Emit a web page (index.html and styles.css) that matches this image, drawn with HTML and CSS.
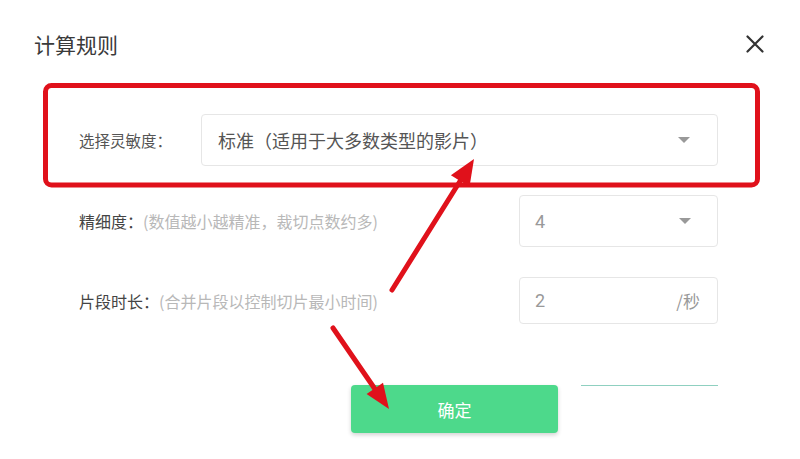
FILE: index.html
```html
<!DOCTYPE html>
<html lang="zh-CN">
<head>
<meta charset="utf-8">
<title>计算规则</title>
<link rel="stylesheet" href="styles.css">
</head>
<body>
<div class="dialog">
  <div class="header">
    <div class="title">计算规则</div>
    <svg class="close" width="18" height="18" viewBox="0 0 18 18"><path d="M1.5 1.5 L16.5 16.5 M16.5 1.5 L1.5 16.5" stroke="#333" stroke-width="2.2" stroke-linecap="round" fill="none"/></svg>
  </div>
  <div class="form">
    <div class="row row-main">
      <div class="label label-main">选择灵敏度：</div>
      <div class="box select-main">
        <span class="value-main">标准（适用于大多数类型的影片）</span>
        <span class="caret"></span>
      </div>
    </div>
    <div class="row row-sub">
      <div class="label"><span class="label-dark">精细度：</span><span class="hint">(数值越小越精准，裁切点数约多)</span></div>
      <div class="box box-small">
        <span class="value-num">4</span>
        <span class="caret"></span>
      </div>
    </div>
    <div class="row row-sub row-last">
      <div class="label"><span class="label-dark">片段时长：</span><span class="hint">(合并片段以控制切片最小时间)</span></div>
      <div class="box box-small box-short">
        <span class="value-num">2</span>
        <span class="unit">/秒</span>
      </div>
    </div>
  </div>
  <div class="footer">
    <div class="btn-ok">确定</div>
    <div class="btn-ghost"></div>
  </div>
</div>
<svg class="annot" width="800" height="459" viewBox="0 0 800 459">
  <rect x="45.5" y="85.5" width="712" height="99.5" rx="6" ry="6" fill="none" stroke="#e0111b" stroke-width="5"/>
  <line x1="392" y1="290" x2="462" y2="178" stroke="#e0111b" stroke-width="5" stroke-linecap="round"/>
  <polygon points="474,159 469.5,186.8 450.9,175.2" fill="#e0111b"/>
  <line x1="333" y1="328" x2="377" y2="392" stroke="#e0111b" stroke-width="5" stroke-linecap="round"/>
  <polygon points="389,409 366.6,394.1 383,382.7" fill="#e0111b"/>
</svg>
</body>
</html>
```
FILE: styles.css
```css
html, body {
  margin: 0;
  padding: 0;
  background: #ffffff;
  width: 800px;
  height: 459px;
  overflow: hidden;
  font-family: "Noto Sans CJK SC", "Noto Sans", sans-serif;
}

.dialog {
  padding: 30px 36px 0 34px;
}

.header {
  display: flex;
  justify-content: space-between;
  align-items: center;
  height: 28px;
}

.title {
  font-size: 21px;
  line-height: 28px;
  color: #3a3a3a;
}

.close {
  display: block;
}

.form {
  margin: 56px 46px 0 45px;
  display: flex;
  flex-direction: column;
}

.row {
  display: flex;
  align-items: center;
}

.row-sub {
  margin-top: 29px;
}

.row-last {
  margin-top: 30px;
}

.label {
  white-space: nowrap;
}

.label-main {
  width: 122px;
  font-size: 15.5px;
  color: #555;
}

.label-dark {
  font-size: 16px;
  color: #444;
}

.hint {
  font-size: 16px;
  color: #b8b8b8;
}

.box {
  box-sizing: border-box;
  height: 52px;
  border: 1px solid #e6e6e6;
  border-radius: 4px;
  display: flex;
  align-items: center;
  justify-content: space-between;
  background: #fff;
}

.select-main {
  flex: 1;
  padding: 0 27px 0 16px;
}

.value-main {
  font-size: 18px;
  color: #555;
}

.caret {
  width: 0;
  height: 0;
  border-left: 6px solid transparent;
  border-right: 6px solid transparent;
  border-top: 6px solid #999;
}

.box-small {
  width: 199px;
  margin-left: auto;
  padding: 0 26px 0 15px;
}

.box-short {
  height: 47px;
  padding-right: 17px;
}

.value-num {
  font-family: "Roboto", "Noto Sans", sans-serif;
  font-size: 18px;
  color: #999;
}

.unit {
  font-size: 17px;
  color: #999;
}

.footer {
  display: flex;
  justify-content: flex-end;
  gap: 23px;
  margin: 61px 46px 0 0;
}

.btn-ok {
  width: 207px;
  height: 48px;
  border-radius: 4px;
  background: #4dd98b;
  color: #fff;
  font-size: 17px;
  display: flex;
  align-items: center;
  justify-content: center;
  box-shadow: 0 2px 4px rgba(0, 0, 0, 0.18);
}

.btn-ghost {
  width: 137px;
  height: 48px;
  border-top: 1px solid #8fd0c0;
  box-sizing: border-box;
}

.annot {
  position: absolute;
  left: 0;
  top: 0;
  pointer-events: none;
}
```
